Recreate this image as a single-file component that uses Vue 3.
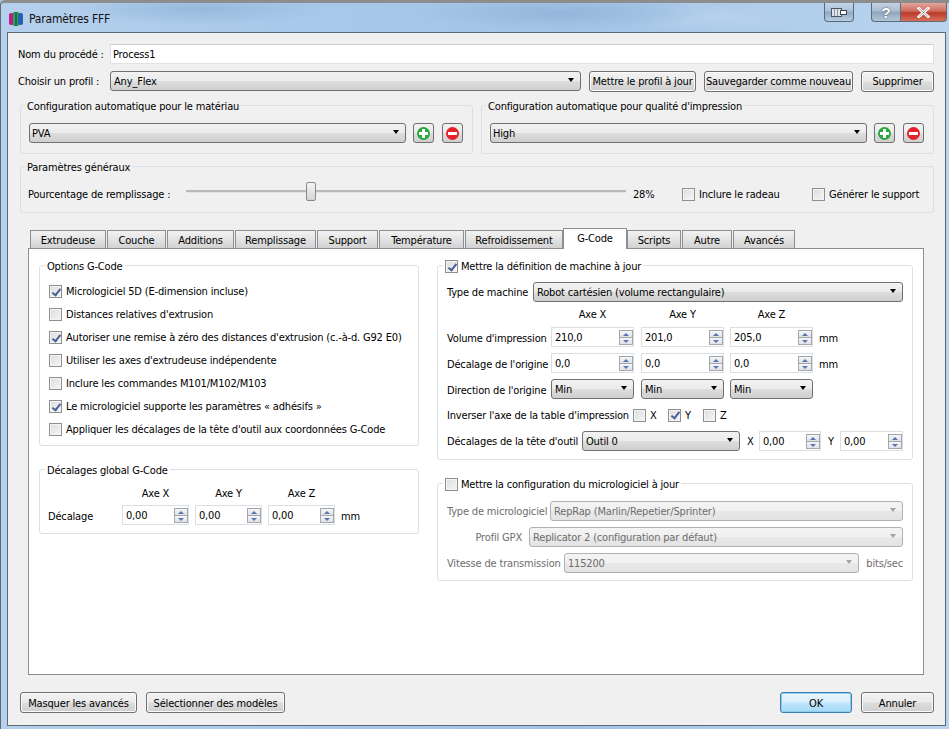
<script setup>
const tabs = [
  ['Extrudeuse', 76], ['Couche', 59], ['Additions', 67], ['Remplissage', 81], ['Support', 61],
  ['Température', 85], ['Refroidissement', 98], ['G-Code', 64], ['Scripts', 54], ['Autre', 50], ['Avancés', 62]
]
const options = [
  ['Micrologiciel 5D (E-dimension incluse)', true],
  ["Distances relatives d'extrusion", false],
  ["Autoriser une remise à zéro des distances d'extrusion (c.-à-d. G92 E0)", true],
  ["Utiliser les axes d'extrudeuse indépendente", false],
  ['Inclure les commandes M101/M102/M103', false],
  ['Le micrologiciel supporte les paramètres « adhésifs »', true],
  ["Appliquer les décalages de la tête d'outil aux coordonnées G-Code", false]
]
</script>

<template>
  <div class="window">
    <header class="titlebar">
      <svg class="appicon" width="15" height="14" viewBox="0 0 15 14">
        <rect x="0" y="1" width="5" height="12" rx="2" fill="#c2188e" />
        <rect x="4" y="0" width="6" height="14" rx="1" fill="#27a35a" />
        <rect x="9" y="1" width="5" height="12" rx="2" fill="#2a5fb0" />
        <rect x="6" y="0" width="2" height="14" fill="#1b6f4a" />
      </svg>
      <span class="title">Paramètres FFF</span>
      <span class="grow"></span>
      <span class="ctl ctl-media">
        <svg width="16" height="9" viewBox="0 0 16 9"><rect x=".5" y=".5" width="10" height="8" fill="#dfe6ee" stroke="#4c5763" /><path d="M3.5 1v7M6.5 1v7" stroke="#8c98a5" /><rect x="9.5" y="2.5" width="6" height="4" fill="#fff" stroke="#3c4650" /></svg>
      </span>
      <span class="ctl ctl-help">?</span>
      <span class="ctl ctl-close">
        <svg width="15" height="11" viewBox="0 0 15 11"><path d="M3 1.5l9 8M12 1.5l-9 8" stroke="#fff" stroke-width="3" stroke-linecap="square" /><path d="M3 1.5l9 8M12 1.5l-9 8" stroke="#56606a" stroke-width=".6" /></svg>
      </span>
    </header>

    <main class="client">
      <div class="row name-row">
        <label class="top-label">Nom du procédé :</label>
        <div class="input">Process1</div>
      </div>

      <div class="row profile-row">
        <label class="top-label">Choisir un profil :</label>
        <div class="combo profile-combo">Any_Flex<i class="arrow"></i></div>
        <button class="btn b-update">Mettre le profil à jour</button>
        <button class="btn b-save">Sauvegarder comme nouveau</button>
        <button class="btn b-del">Supprimer</button>
      </div>

      <div class="auto-row">
        <section class="group auto">
          <span class="legend">Configuration automatique pour le matériau</span>
          <div class="combo grow">PVA<i class="arrow"></i></div>
          <button class="iconbtn"><span class="disc plus"></span></button>
          <button class="iconbtn"><span class="disc minus"></span></button>
        </section>
        <section class="group auto">
          <span class="legend">Configuration automatique pour qualité d'impression</span>
          <div class="combo grow">High<i class="arrow"></i></div>
          <button class="iconbtn"><span class="disc plus"></span></button>
          <button class="iconbtn"><span class="disc minus"></span></button>
        </section>
      </div>

      <section class="group general">
        <span class="legend">Paramètres généraux</span>
        <span class="fill-label">Pourcentage de remplissage :</span>
        <div class="slider"><i class="handle"></i></div>
        <span class="pct">28%</span>
        <span class="check raft"><i class="box"></i>Inclure le radeau</span>
        <span class="check"><i class="box"></i>Générer le support</span>
      </section>

      <div class="tabs">
        <span
          v-for="t in tabs"
          :key="t[0]"
          class="tab"
          :class="{ active: t[0] === 'G-Code' }"
          :style="{ width: t[1] + 'px' }"
        >{{ t[0] }}</span>
      </div>

      <div class="pane">
        <div class="col-left">
          <section class="group opts">
            <span class="legend">Options G-Code</span>
            <div v-for="o in options" :key="o[0]" class="check opt">
              <i class="box" :class="{ on: o[1] }"></i>{{ o[0] }}
            </div>
          </section>

          <section class="group offsets">
            <span class="legend">Décalages global G-Code</span>
            <div class="off-grid">
              <span></span><span class="axis">Axe X</span><span class="axis">Axe Y</span><span class="axis">Axe Z</span><span></span>
              <span class="cell">Décalage</span>
              <div class="spin">0,00<i class="steps"><b></b><b></b></i></div>
              <div class="spin">0,00<i class="steps"><b></b><b></b></i></div>
              <div class="spin">0,00<i class="steps"><b></b><b></b></i></div>
              <span class="cell">mm</span>
            </div>
          </section>
        </div>

        <div class="col-right">
          <section class="group machine">
            <span class="legend check"><i class="box on"></i>Mettre la définition de machine à jour</span>
            <div class="row">
              <span class="l-type">Type de machine</span>
              <div class="combo grow">Robot cartésien (volume rectangulaire)<i class="arrow"></i></div>
            </div>
            <div class="m-grid">
              <span></span><span class="axis">Axe X</span><span class="axis">Axe Y</span><span class="axis">Axe Z</span><span></span>
              <span class="cell">Volume d'impression</span>
              <div class="spin">210,0<i class="steps"><b></b><b></b></i></div>
              <div class="spin">201,0<i class="steps"><b></b><b></b></i></div>
              <div class="spin">205,0<i class="steps"><b></b><b></b></i></div>
              <span class="cell">mm</span>
              <span class="cell">Décalage de l'origine</span>
              <div class="spin">0,0<i class="steps"><b></b><b></b></i></div>
              <div class="spin">0,0<i class="steps"><b></b><b></b></i></div>
              <div class="spin">0,0<i class="steps"><b></b><b></b></i></div>
              <span class="cell">mm</span>
              <span class="cell">Direction de l'origine</span>
              <div class="combo">Min<i class="arrow"></i></div>
              <div class="combo">Min<i class="arrow"></i></div>
              <div class="combo">Min<i class="arrow"></i></div>
              <span></span>
            </div>
            <div class="row invert">
              <span class="l-invert">Inverser l'axe de la table d'impression</span>
              <span class="check w35"><i class="box"></i>X</span>
              <span class="check w35"><i class="box on"></i>Y</span>
              <span class="check w35"><i class="box"></i>Z</span>
            </div>
            <div class="row tool">
              <span class="l-tool">Décalages de la tête d'outil</span>
              <div class="combo c-tool">Outil 0<i class="arrow"></i></div>
              <span class="l-x">X</span>
              <div class="spin s-x">0,00<i class="steps"><b></b><b></b></i></div>
              <span class="l-y">Y</span>
              <div class="spin s-y">0,00<i class="steps"><b></b><b></b></i></div>
            </div>
          </section>

          <section class="group firmware">
            <span class="legend check enabled"><i class="box"></i>Mettre la configuration du micrologiciel à jour</span>
            <div class="row">
              <span class="l-fw">Type de micrologiciel</span>
              <div class="combo off grow">RepRap (Marlin/Repetier/Sprinter)<i class="arrow"></i></div>
            </div>
            <div class="row fw-gap">
              <span class="l-gpx">Profil GPX</span>
              <div class="combo off grow">Replicator 2 (configuration par défaut)<i class="arrow"></i></div>
            </div>
            <div class="row fw-gap">
              <span class="l-speed">Vitesse de transmission</span>
              <div class="combo off grow">115200<i class="arrow"></i></div>
              <span class="l-bits">bits/sec</span>
            </div>
          </section>
        </div>
      </div>

      <footer class="foot">
        <button class="btn b-hide">Masquer les avancés</button>
        <button class="btn b-models">Sélectionner des modèles</button>
        <span class="grow"></span>
        <button class="btn ok">OK</button>
        <button class="btn b-cancel">Annuler</button>
      </footer>
    </main>
  </div>
</template>

<style scoped>
.window {
  box-sizing: border-box;
  width: 949px;
  height: 729px;
  overflow: hidden;
  display: flex;
  flex-direction: column;
  border-top: 3px solid #8d8d8d;
  border-left: 1px solid #5f6a75;
  border-top-left-radius: 5px;
  background:
    radial-gradient(ellipse 130px 16px at 200px 6px, #96b9dc, transparent),
    radial-gradient(ellipse 150px 16px at 560px 10px, #93b6da, transparent),
    radial-gradient(ellipse 110px 16px at 720px 14px, #b6d1ec, transparent),
    linear-gradient(90deg, #b4d0ec, #a9c9ea 30%, #a3c4e6 60%, #b9d4ef);
  font-family: "DejaVu Sans", "Noto Sans", sans-serif;
  font-stretch: condensed;
  font-size: 11px;
  letter-spacing: -0.17px;
  color: #000;
}
.titlebar {
  flex: 0 0 29px;
  display: flex;
  align-items: flex-start;
  padding-right: 2px;
}
.appicon { margin: 9px 0 0 8px; }
.title { margin: 9px 0 0 5px; font-size: 12px; line-height: 14px; color: #111; }
.grow { flex: 1 1 0; min-width: 0; }
.ctl {
  box-sizing: border-box;
  height: 19px;
  display: flex;
  align-items: center;
  justify-content: center;
  border: 1px solid #5d6a78;
  border-top: 0;
}
.ctl-media {
  width: 30px;
  margin-right: 17px;
  border-radius: 0 0 4px 4px;
  background: linear-gradient(#c3d6e9, #a9c1d9 45%, #8fa9c3 50%, #b8cee2);
}
.ctl-help {
  width: 29px;
  border-right: 0;
  border-radius: 0 0 0 4px;
  background: linear-gradient(#c3d3e3, #a8bccf 45%, #8ea5ba 50%, #b3c7d9);
  color: #fff;
  font: bold 15px "Liberation Sans", sans-serif;
  text-shadow: 0 0 2px #3f4a55;
}
.ctl-close {
  width: 47px;
  border-radius: 0 0 4px 0;
  background: linear-gradient(#e2a79c, #cf6a5b 45%, #b93a27 55%, #d8705c);
}
.client {
  flex: 1 1 0;
  box-sizing: border-box;
  margin: 0 3px 3px 6px;
  padding: 11px 11px 0 10px;
  border: 1px solid #5b6875;
  background: #f0f0f0;
  display: flex;
  flex-direction: column;
}
.row { display: flex; align-items: center; height: 20px; }
.top-label { flex: 0 0 92px; }
.input {
  flex: 1;
  box-sizing: border-box;
  height: 20px;
  line-height: 19px;
  padding-left: 2px;
  background: #fff;
  border: 1px solid #dde2e7;
  border-top-color: #c9ced3;
}
.profile-row { margin-top: 7px; }
.profile-combo { width: 471px; margin-right: 8px; }
.b-update { width: 107px; margin-right: 8px; }
.b-save { width: 149px; margin-right: 8px; }
.b-del { width: 73px; }
.combo {
  position: relative;
  box-sizing: border-box;
  height: 20px;
  line-height: 19px;
  padding-left: 3px;
  border: 1px solid #707070;
  border-radius: 3px;
  white-space: nowrap;
  background: linear-gradient(#f2f2f2, #ebebeb 48%, #dddddd 52%, #cfcfcf);
}
.auto .combo { padding-left: 2px; }
.arrow {
  position: absolute;
  right: 6px;
  top: 6px;
  border-style: solid;
  border-width: 4px 3.5px 0;
  border-color: #000 transparent transparent;
}
.combo.off {
  color: #6d6d6d;
  border-color: #adb2b5;
  background: linear-gradient(#f4f4f4, #f0f0f0 48%, #e8e8e8 52%, #e3e3e3);
}
.combo.off .arrow { border-top-color: #a3a3a3; }
.btn {
  box-sizing: border-box;
  height: 21px;
  padding: 1px 0 0;
  font: inherit;
  font-stretch: inherit;
  letter-spacing: inherit;
  color: #000;
  border: 1px solid #707070;
  border-radius: 3px;
  white-space: nowrap;
  background: linear-gradient(#f2f2f2, #ebebeb 48%, #dddddd 52%, #cfcfcf);
  box-shadow: inset 0 0 0 1px #fbfbfb;
}
.group {
  position: relative;
  box-sizing: border-box;
  border: 1px solid #d9dfe4;
  border-radius: 3px;
}
.legend {
  position: absolute;
  top: -6px;
  left: 4px;
  padding: 0 2px;
  line-height: 13px;
  background: #f0f0f0;
  white-space: nowrap;
}
.auto-row {
  display: flex;
  gap: 8px;
  margin: 14px 0 0 2px;
}
.auto {
  width: 453px;
  height: 49px;
  display: flex;
  align-items: center;
  gap: 7px;
  padding: 7px 9px 0 8px;
}
.auto .iconbtn + .iconbtn { margin-left: 1px; }
.iconbtn {
  box-sizing: border-box;
  width: 21px;
  height: 20px;
  padding: 0;
  display: flex;
  align-items: center;
  justify-content: center;
  border: 1px solid #707070;
  border-radius: 3px;
  background: linear-gradient(#f2f2f2, #ebebeb 48%, #dddddd 52%, #cfcfcf);
}
.disc {
  position: relative;
  width: 13px;
  height: 13px;
  border-radius: 50%;
}
.disc.plus { background: #28a83f; }
.disc.minus { background: #e5212d; }
.disc::before {
  content: "";
  position: absolute;
  left: 2px;
  top: 5px;
  width: 9px;
  height: 3px;
  background: #fff;
}
.disc.plus::after {
  content: "";
  position: absolute;
  left: 5px;
  top: 2px;
  width: 3px;
  height: 9px;
  background: #fff;
}
.general {
  height: 47px;
  margin: 12px 0 0 2px;
  display: flex;
  align-items: center;
  padding: 10px 0 0 7px;
}
.fill-label { width: 158px; }
.slider {
  position: relative;
  width: 440px;
  height: 2px;
  margin-top: -7px;
  background: #b9b9b9;
  border-bottom: 1px solid #e3e3e3;
}
.handle {
  position: absolute;
  left: 120px;
  top: -8px;
  box-sizing: border-box;
  width: 10px;
  height: 19px;
  border: 1px solid #8a8a8a;
  border-radius: 2px;
  background: linear-gradient(#f4f4f4, #d6d6d6);
}
.pct { margin-left: 7px; width: 49px; }
.raft { width: 130px; }
.check { display: flex; align-items: center; white-space: nowrap; }
.box {
  position: relative;
  flex: 0 0 13px;
  box-sizing: border-box;
  width: 13px;
  height: 13px;
  margin-right: 4px;
  border: 1px solid #8e8f8f;
  background: linear-gradient(135deg, #dcdcdc, #f6f6f6);
  box-shadow: inset 0 0 0 1px #f4f4f4;
}
.box.on::after {
  content: "";
  position: absolute;
  left: 3.5px;
  top: 0.5px;
  width: 3px;
  height: 7px;
  border: solid #4a5f97;
  border-width: 0 2px 2px 0;
  transform: rotate(38deg);
}
.tabs {
  display: flex;
  align-items: flex-end;
  height: 20px;
  margin: 15px 0 0 12px;
  position: relative;
  z-index: 1;
}
.tab {
  box-sizing: border-box;
  height: 18px;
  line-height: 19px;
  text-align: center;
  border: 1px solid #8c8e94;
  border-bottom: 0;
  margin-right: 1px;
  background: linear-gradient(#f2f2f2, #e3e3e3 50%, #d2d2d2);
}
.tab.active {
  height: 21px;
  margin: 0 0 -1px -1px;
  line-height: 19px;
  background: #fff;
}
.pane {
  box-sizing: border-box;
  flex: 0 0 427px;
  width: 896px;
  margin-left: 10px;
  padding: 16px 9px 0 10px;
  background: #fff;
  border: 1px solid #8c8e94;
  display: flex;
  gap: 18px;
}
.pane .legend { background: #fff; left: 5px; }
.pane .group { border-color: #dce1e6; }
.col-left { width: 380px; flex: none; }
.col-right { width: 476px; flex: none; }
.opts {
  height: 181px;
  padding: 14px 0 0 9px;
}
.opt { height: 23px; }
.offsets {
  height: 65px;
  margin-top: 23px;
  padding: 13px 0 0 8px;
}
.off-grid {
  display: grid;
  grid-template-columns: 74px 73px 73px 73px auto;
  grid-template-rows: 22px 20px;
  align-items: center;
}
.off-grid .spin { width: 67px; }
.off-grid .axis { width: 67px; padding-bottom: 2px; }
.cell { padding-top: 2px; }
.axis { text-align: center; }
.spin {
  position: relative;
  box-sizing: border-box;
  height: 20px;
  line-height: 20px;
  padding-left: 3px;
  background: #fff;
  border: 1px solid #dadfe4;
}
.steps {
  position: absolute;
  right: 0;
  top: 2px;
  width: 14px;
  height: 15px;
  display: flex;
  flex-direction: column;
  gap: 0;
}
.steps b {
  position: relative;
  flex: 1;
  box-sizing: border-box;
  border: 1px solid #a6a6a6;
  background: linear-gradient(#f4f6f9, #dfe3e9);
}
.steps b + b { margin-top: -1px; }
.steps b::after {
  content: "";
  position: absolute;
  left: 3px;
  top: 2px;
  border-style: solid;
  border-width: 0 3px 3px;
  border-color: transparent transparent #5c75ad;
}
.steps b + b::after {
  border-width: 3px 3px 0;
  border-color: #5c75ad transparent transparent;
}
.machine {
  height: 195px;
  padding: 16px 9px 0 9px;
}
.l-type { flex: 0 0 86px; white-space: nowrap; }
.m-grid {
  display: grid;
  grid-template-columns: 104px 90px 89px 89px auto;
  grid-template-rows: 16px 20px 20px 20px;
  row-gap: 6px;
  margin-top: 3px;
  align-items: center;
  white-space: nowrap;
}
.m-grid .spin, .m-grid .combo, .m-grid .axis { width: 83px; }
.m-grid .axis { align-self: end; }
.invert { margin-top: 6px; }
.l-invert { flex: 0 0 186px; white-space: nowrap; }
.w35 { flex: 0 0 35px; }
.tool { margin-top: 6px; }
.l-tool { flex: 0 0 135px; white-space: nowrap; }
.c-tool { flex: 0 0 158px; }
.l-x { flex: 0 0 12px; margin-left: 7px; }
.s-x { flex: 0 0 62px; }
.l-y { flex: 0 0 12px; margin-left: 7px; }
.s-y { flex: 0 0 63px; }
.firmware {
  height: 98px;
  margin-top: 23px;
  padding: 17px 9px 0 9px;
  color: #6d6d6d;
}
.enabled { color: #000; }
.legend.check .box { margin-right: 3px; }
.fw-gap { margin-top: 6px; }
.l-fw { flex: 0 0 103px; white-space: nowrap; }
.l-gpx { flex: 0 0 75px; margin-right: 7px; text-align: right; white-space: nowrap; }
.l-speed { flex: 0 0 117px; white-space: nowrap; }
.l-bits { margin-left: 7px; }
.foot {
  display: flex;
  margin: 17px 0 0 2px;
  height: 21px;
}
.b-hide { width: 117px; margin-right: 9px; }
.b-models { width: 139px; }
.ok {
  width: 72px;
  margin-right: 9px;
  border: 1px solid #3c7fb1;
  background: linear-gradient(#eaf6fd, #d9f0fc 48%, #bee6fd 52%, #a7d9f5);
  box-shadow: inset 0 0 0 1px #8fcdee;
}
.b-cancel { width: 73px; }
</style>

<style>
html, body { margin: 0; background: #a9c9ea; }
</style>
